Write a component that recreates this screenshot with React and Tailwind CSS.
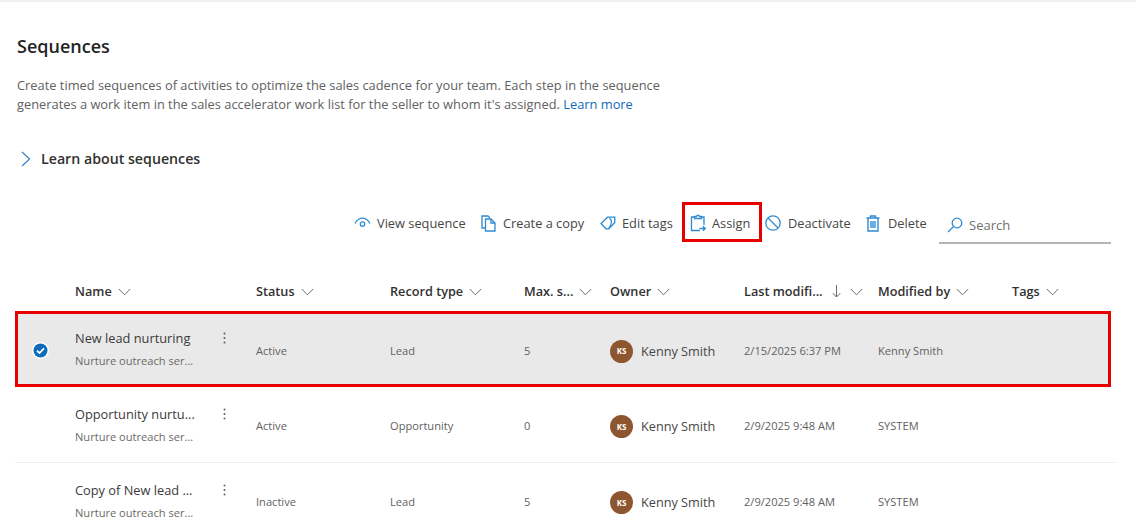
import React from 'react';

const Chevron = () => (
  <svg width="13" height="8" viewBox="0 0 13 8" fill="none" stroke="#6b6b6b" strokeWidth="1" className="shrink-0">
    <path d="M0.8 1 L6.5 6.8 L12.2 1" />
  </svg>
);

const ViewIcon = () => (
  <svg width="17" height="12" viewBox="0 0 17 12" fill="none" stroke="#2f8ad0" strokeWidth="1.3">
    <path d="M1 6.5 C3 2.8 6 1.2 8.5 1.2 C11 1.2 14 2.8 16 6.5" />
    <circle cx="8.5" cy="7" r="2.2" />
  </svg>
);

const CopyIcon = () => (
  <svg width="15" height="17" viewBox="0 0 15 17" fill="none" stroke="#2f8ad0" strokeWidth="1.3">
    <path d="M4 13 H1 V1 H7 L9 3" />
    <path d="M4.5 4 H10 L14 8 V16 H4.5 Z" />
    <path d="M10 4 V8 H14" />
  </svg>
);

const TagIcon = () => (
  <svg width="16" height="14" viewBox="0 0 16 14" fill="none" stroke="#2f8ad0" strokeWidth="1.3">
    <path d="M1 7.5 L7.5 1.2 H14.8 V6.5 L8.6 12.8 H6 Z" />
    <path d="M9.5 2 C12 4 12 8 9 12" />
  </svg>
);

const AssignIcon = () => (
  <svg width="16" height="18" viewBox="0 0 16 18" fill="none" stroke="#2f8ad0" strokeWidth="1.3">
    <path d="M4.5 3 H1.5 V16.5 H10" />
    <path d="M11.5 3 H14 V11" />
    <path d="M4.5 4.5 V2.5 H6.5 C6.8 0.8 9.2 0.8 9.5 2.5 H11.5 V4.5 Z" />
    <path d="M9.5 14.5 H15 M12.8 12.2 L15.2 14.5 L12.8 16.8" />
  </svg>
);

const BlockIcon = () => (
  <svg width="16" height="16" viewBox="0 0 16 16" fill="none" stroke="#2f8ad0" strokeWidth="1.3">
    <circle cx="8" cy="8" r="7.2" />
    <path d="M3 3 L13 13" />
  </svg>
);

const TrashIcon = () => (
  <svg width="14" height="17" viewBox="0 0 14 17" fill="none" stroke="#2f8ad0" strokeWidth="1.4">
    <path d="M0.5 3 H13.5 M4.5 3 V1 H9.5 V3" />
    <path d="M2 3 V16 H12 V3" />
    <path d="M5 6 V13 M7 6 V13 M9 6 V13" />
  </svg>
);

const SearchIcon = () => (
  <svg width="16" height="16" viewBox="0 0 16 16" fill="none" stroke="#2f8ad0" strokeWidth="1.3">
    <circle cx="10" cy="6" r="4.8" />
    <path d="M6.5 9.5 L1 15" />
  </svg>
);

const columns = ['Name', 'Status', 'Record type', 'Max. s...', 'Owner', 'Last modifi...', 'Modified by', 'Tags'];

const rows = [
  { name: 'New lead nurturing', status: 'Active', type: 'Lead', max: '5', date: '2/15/2025 6:37 PM', by: 'Kenny Smith', selected: true },
  { name: 'Opportunity nurtu...', status: 'Active', type: 'Opportunity', max: '0', date: '2/9/2025 9:48 AM', by: 'SYSTEM' },
  { name: 'Copy of New lead ...', status: 'Inactive', type: 'Lead', max: '5', date: '2/9/2025 9:48 AM', by: 'SYSTEM' },
];

const gridCols = 'grid grid-cols-[60px_181px_134px_134px_86px_134px_134px_134px_99px]';

const ActionButton = ({ label, icon, className }) => (
  <div className={`flex items-center text-[12.8px] text-[#484644] whitespace-nowrap ${className}`}>
    {icon}
    <span>{label}</span>
  </div>
);

const Row = ({ row }) => (
  <div
    className={`${gridCols} items-center h-[76px] ${
      row.selected
        ? 'bg-[#e9e9e9] outline-3 -outline-offset-3 outline-[#e60000]'
        : 'border-b border-[#ededed] w-[1100px]'
    }`}
  >
    <div className="flex justify-center pr-[10px] pt-[2px]">
      {row.selected && (
        <svg width="17" height="17" viewBox="0 0 17 17">
          <circle cx="8.5" cy="8.5" r="8.5" fill="#ffffff" />
          <circle cx="8.5" cy="8.5" r="7" fill="#0f6cbd" />
          <path d="M5 8.8 L7.5 11 L12 6.3" fill="none" stroke="#ffffff" strokeWidth="1.8" />
        </svg>
      )}
    </div>
    <div className="flex items-start justify-between pr-[30px]">
      <div className="min-w-0">
        <div className="text-[12.8px] leading-[18px] text-[#3b3a39] whitespace-nowrap">{row.name}</div>
        <div className="text-[11.1px] leading-[16px] mt-[6px] text-[#6b6a68] whitespace-nowrap">Nurture outreach ser...</div>
      </div>
      <svg width="3" height="12" viewBox="0 0 3 12" fill="#5f5e5c" className="mt-[3px]">
        <circle cx="1.5" cy="1.5" r="1" />
        <circle cx="1.5" cy="6" r="1" />
        <circle cx="1.5" cy="10.5" r="1" />
      </svg>
    </div>
    <div className="text-[11.1px] text-[#616161] pt-[4px]">{row.status}</div>
    <div className="text-[11.1px] text-[#616161] pt-[4px]">{row.type}</div>
    <div className="text-[11.1px] text-[#616161] pt-[4px]">{row.max}</div>
    <div className="flex items-center gap-[8px] whitespace-nowrap pt-[4px]">
      <div className="w-[23px] h-[23px] rounded-full bg-[#8e562e] text-white text-[8px] font-bold flex items-center justify-center shrink-0">KS</div>
      <span className="text-[12.7px] text-[#484644]">Kenny Smith</span>
    </div>
    <div className="text-[11.1px] text-[#616161] pt-[4px] whitespace-nowrap">{row.date}</div>
    <div className="text-[11.1px] text-[#616161] pt-[4px] whitespace-nowrap">{row.by}</div>
    <div />
  </div>
);

export default function App() {
  return (
    <div className="w-[1136px] h-[531px] overflow-hidden bg-white border-t-2 border-[#f0f0f0] font-['Open_Sans',sans-serif]">
      <div className="pt-[31px] pl-[17px]">
        <h1 className="text-[18px] leading-[26px] font-semibold text-[#242424]">Sequences</h1>
        <p className="mt-[17px] text-[12.85px] leading-[19px] text-[#616161] w-[680px]">
          Create timed sequences of activities to optimize the sales cadence for your team. Each step in the sequence generates a work item in the sales accelerator work list for the seller to whom it's assigned.{' '}
          <span className="text-[#0f6cbd]">Learn more</span>
        </p>
        <div className="mt-[34px] flex items-center gap-[10px] pl-[4px]">
          <svg width="10" height="16" viewBox="0 0 10 16" fill="none" stroke="#2f7fc4" strokeWidth="1.1">
            <path d="M1 1 L8.6 8 L1 15" />
          </svg>
          <span className="text-[14.2px] font-semibold text-[#323130]">Learn about sequences</span>
        </div>
      </div>

      <div className="mt-[33px] ml-[354px] flex items-center h-[40px]">
        <ActionButton label="View sequence" icon={<ViewIcon />} className="w-[127px] gap-[6px] pt-[2px]" />
        <ActionButton label="Create a copy" icon={<CopyIcon />} className="w-[119px] gap-[7px] pt-[2px]" />
        <ActionButton label="Edit tags" icon={<TagIcon />} className="w-[82px] gap-[6px] pt-[2px]" />
        <ActionButton label="Assign" icon={<AssignIcon />} className="w-[80px] h-[40px] border-3 border-[#e60000] pl-[5px] pt-[2px] gap-[6px] mr-[3px]" />
        <ActionButton label="Deactivate" icon={<BlockIcon />} className="w-[101px] gap-[7px] pt-[2px]" />
        <ActionButton label="Delete" icon={<TrashIcon />} className="w-[73px] gap-[8px] pt-[2px]" />
        <div className="w-[172px] h-[37px] mt-[7px] pt-[1px] border-b-2 border-[#b5b5b5] flex items-center gap-[6px] pl-[8px] text-[13px] text-[#707070]">
          <SearchIcon />
          <span>Search</span>
        </div>
      </div>

      <div className="ml-[15px] w-[1096px] mt-[28px]">
        <div className={`${gridCols} items-center h-[41px] pt-[2px]`}>
          <div />
          {columns.map((col) => (
            <div key={col} className="flex items-center gap-[6px] text-[12.7px] font-semibold text-[#323130] whitespace-nowrap">
              <span>{col}</span>
              {col === 'Last modifi...' && (
                <svg width="9" height="13" viewBox="0 0 9 13" fill="none" stroke="#6b6b6b" strokeWidth="1" className="mx-[3px]">
                  <path d="M4.5 0 V12 M0.8 8.2 L4.5 12 L8.2 8.2" />
                </svg>
              )}
              <Chevron />
            </div>
          ))}
        </div>
        {rows.map((row) => (
          <Row key={row.name} row={row} />
        ))}
      </div>
    </div>
  );
}
